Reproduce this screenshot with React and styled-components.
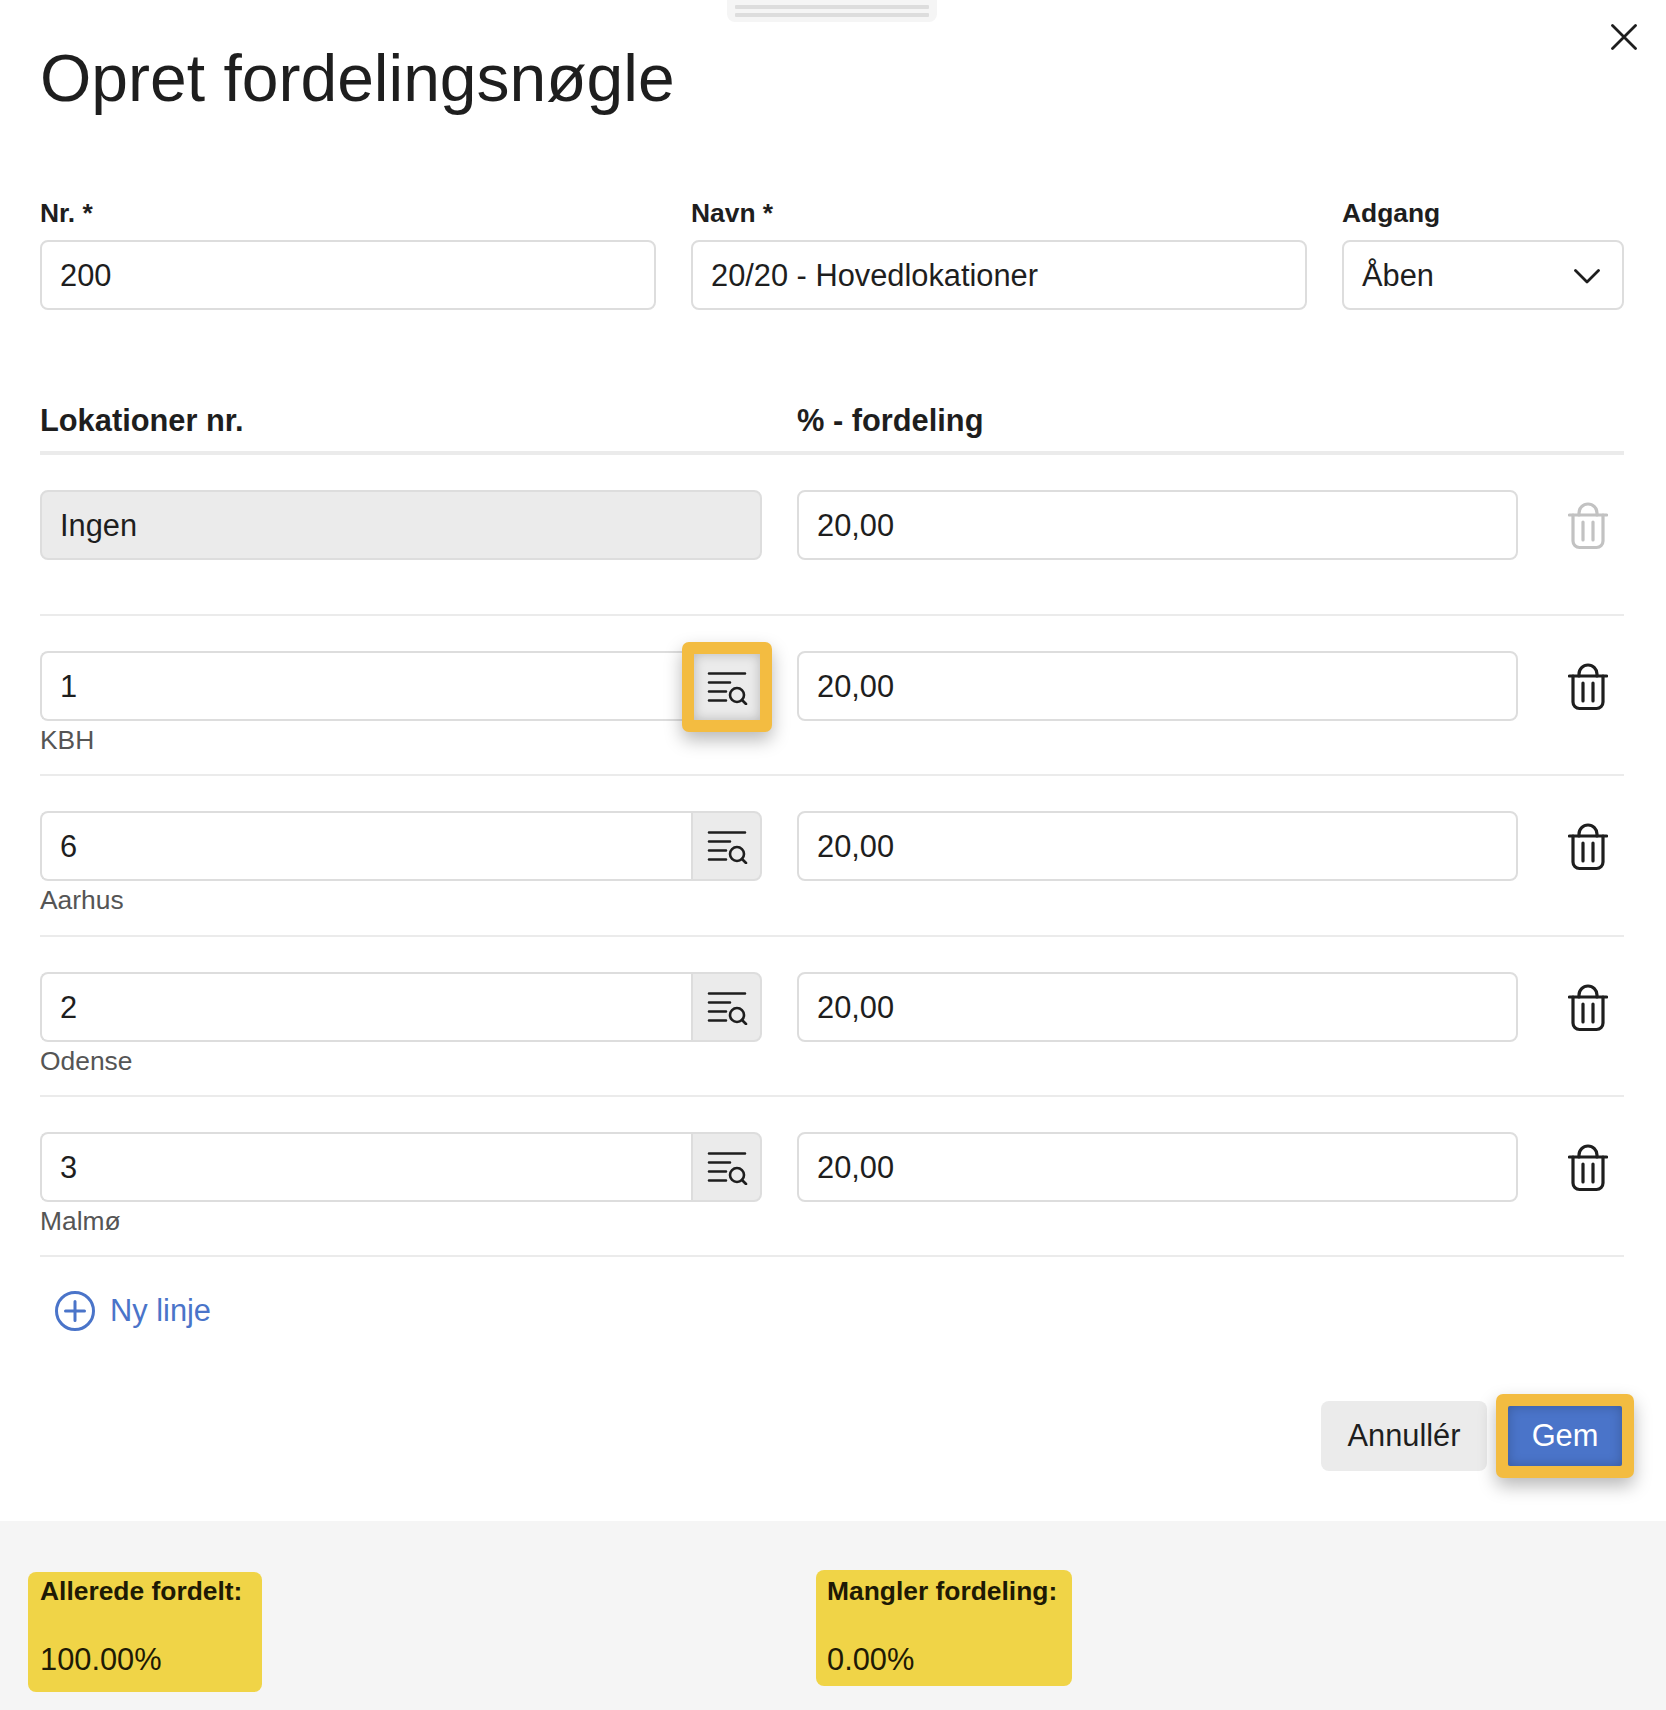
import React from 'react'
import styled, { createGlobalStyle, css } from 'styled-components'

const GlobalStyle = createGlobalStyle`
  * {
    box-sizing: border-box;
  }
  body {
    margin: 0;
    background: #fff;
    color: #1e1e1e;
    font-family: "Liberation Sans", Arial, sans-serif;
  }
`

const highlight = css`
  position: relative;
  top: 1px;
  z-index: 2;
  flex-basis: 70px;
  margin-left: 1px;
  border-color: #f3bc41;
  border-radius: 2px;
  box-shadow: 0 0 0 10px #f3bc41, 0 8px 18px 10px rgba(0, 0, 0, 0.28),
    inset 0 0 12px rgba(0, 0, 0, 0.22);
`

const Page = styled.div`
  position: relative;
  width: 1666px;
  min-height: 1710px;
  display: flex;
  flex-direction: column;
`

const Handle = styled.div`
  position: absolute;
  top: 0;
  left: 727px;
  width: 210px;
  height: 22px;
  padding: 5px 8px 0;
  background: #f5f5f5;
  border-radius: 0 0 8px 8px;
  display: flex;
  flex-direction: column;
  gap: 4px;

  span {
    height: 4px;
    background: #ddd;
    border-radius: 1px;
  }
`

const Main = styled.main`
  padding: 0 42px 0 40px;
  height: 1521px;
`

const Header = styled.header`
  display: flex;
  justify-content: space-between;
  height: 198px;
`

const Title = styled.h1`
  margin: 40px 0 0;
  font-size: 66px;
  line-height: 76px;
  font-weight: 400;
`

const CloseButton = styled.button`
  width: 26px;
  height: 26px;
  margin: 24px -13px 0 0;
  padding: 0;
  border: 0;
  background: none;
  color: #1e1e1e;
`

const FormGrid = styled.div`
  display: grid;
  grid-template-columns: 616px 616px 282px;
  column-gap: 35px;
`

const Label = styled.label`
  display: block;
  margin-bottom: 12px;
  font-size: 26.4px;
  line-height: 30px;
  font-weight: 700;
`

const fieldBase = css`
  width: 100%;
  height: 70px;
  padding: 2px 18px 0;
  border: 2px solid #ddd;
  border-radius: 8px;
  background: ${({ $disabled }) => ($disabled ? '#ebebeb' : '#fff')};
  color: #1e1e1e;
  font-family: inherit;
  font-size: 30.8px;
  outline: none;
`

const Input = styled.input`
  ${fieldBase}
`

const Select = styled.div`
  ${fieldBase}
  display: flex;
  align-items: center;
  justify-content: space-between;
  padding-right: 22px;
`

const TableHead = styled.div`
  display: grid;
  grid-template-columns: 722px 1fr;
  column-gap: 35px;
  margin-top: 92px;
  padding-bottom: 12px;
  border-bottom: 4px solid #ebebeb;
  font-size: 30.8px;
  line-height: 37px;
  font-weight: 700;
`

const Row = styled.div`
  display: grid;
  grid-template-columns: 722px 721px 72px;
  column-gap: 35px;
  align-content: start;
  height: ${({ $first }) => ($first ? '161px' : '160.3px')};
  padding-top: 35px;
  border-bottom: 2px solid #ebebeb;
`

const InputGroup = styled.div`
  display: flex;

  ${Input} {
    flex: 1;
    border-right: 0;
    border-radius: 8px 0 0 8px;
  }
`

const LookupButton = styled.button`
  flex: 0 0 71px;
  height: 70px;
  padding: 0;
  display: flex;
  align-items: center;
  justify-content: center;
  border: 2px solid #ddd;
  border-radius: 0 8px 8px 0;
  background: #ebebeb;
  color: #1e1e1e;
  ${({ $highlight }) => $highlight && highlight}
`

const SubText = styled.div`
  margin-top: 4px;
  font-size: 26.4px;
  line-height: 30px;
  color: #555;
`

const TrashButton = styled.button`
  height: 70px;
  padding: 2px 2px 0 0;
  border: 0;
  background: none;
  display: flex;
  align-items: center;
  justify-content: center;
  color: ${({ $muted }) => ($muted ? '#c2c2c2' : '#1e1e1e')};
`

const AddLine = styled.button`
  display: flex;
  align-items: center;
  gap: 15px;
  margin-top: 34px;
  padding: 0 0 0 15px;
  border: 0;
  background: none;
  color: #4a74c9;
  font-family: inherit;
  font-size: 30.8px;
  line-height: 40px;
`

const Actions = styled.div`
  display: flex;
  justify-content: flex-end;
  align-items: center;
  margin-top: 70px;
  padding-right: 2px;
`

const CancelButton = styled.button`
  width: 166px;
  height: 70px;
  border: 0;
  border-radius: 8px;
  background: #ebebeb;
  color: #1e1e1e;
  font-family: inherit;
  font-size: 30.8px;
`

const SaveButton = styled.button`
  width: 114px;
  height: 60px;
  margin-left: 21px;
  padding: 0;
  border: 0;
  border-radius: 2px;
  background: #4a74c9;
  color: #fff;
  font-family: inherit;
  font-size: 30.8px;
  position: relative;
  z-index: 2;
  box-shadow: 0 0 0 12px #f3bc41, 0 8px 18px 12px rgba(0, 0, 0, 0.28),
    inset 0 0 12px rgba(0, 0, 0, 0.22);
`

const Footer = styled.footer`
  flex: 1;
  display: grid;
  grid-template-columns: 788px 1fr;
  align-items: start;
  padding-left: 28px;
  background: #f5f5f5;
`

const Stat = styled.div`
  width: ${({ $width }) => $width}px;
  height: ${({ $height }) => $height}px;
  margin-top: ${({ $top }) => $top}px;
  padding: ${({ $pad }) => $pad}px 0 0 ${({ $left }) => $left}px;
  border-radius: 8px;
  background: #f0d447;
  color: #1e1a05;
  font-size: 26.4px;
  line-height: 30px;
`

const StatLabel = styled.div`
  font-weight: 700;
  white-space: nowrap;
`

const StatValue = styled.div`
  margin-top: 39px;
  font-size: 30.8px;
`

const LookupIcon = () => (
  <svg width="42" height="36" viewBox="0 0 42 36" fill="none" stroke="currentColor" strokeWidth="2.6" strokeLinecap="round">
    <path d="M3 4.5h36M3 13.5h21M3 22.5h17M3 31.5h17" />
    <circle cx="31" cy="26" r="7" />
    <path d="M36 31l4 4" />
  </svg>
)

const TrashIcon = () => (
  <svg width="40" height="48" viewBox="0 0 40 48" fill="none" stroke="currentColor" strokeWidth="3.2" strokeLinecap="round" strokeLinejoin="round">
    <path d="M1.5 13h37" />
    <path d="M5 13v26a6.5 6.5 0 0 0 6.5 6.5h17A6.5 6.5 0 0 0 35 39V13" />
    <path d="M11 13v-2a9 9 0 0 1 18 0v2" />
    <path d="M15 20v18M25 20v18" />
  </svg>
)

const rows = [
  { nr: '1', name: 'KBH', highlighted: true },
  { nr: '6', name: 'Aarhus' },
  { nr: '2', name: 'Odense' },
  { nr: '3', name: 'Malmø' },
]

export default function App() {
  return (
    <>
      <GlobalStyle />
      <Page>
        <Handle>
          <span />
          <span />
        </Handle>
        <Main>
          <Header>
            <Title>Opret fordelingsnøgle</Title>
            <CloseButton aria-label="Luk">
              <svg width="26" height="26" viewBox="0 0 26 26" fill="none" stroke="currentColor" strokeWidth="2.8" strokeLinecap="round">
                <path d="M1.5 1.5l23 23M24.5 1.5l-23 23" />
              </svg>
            </CloseButton>
          </Header>

          <FormGrid>
            <div>
              <Label>Nr. *</Label>
              <Input readOnly value="200" />
            </div>
            <div>
              <Label>Navn *</Label>
              <Input readOnly value="20/20 - Hovedlokationer" />
            </div>
            <div>
              <Label>Adgang</Label>
              <Select>
                Åben
                <svg width="26" height="15" viewBox="0 0 26 15" fill="none" stroke="currentColor" strokeWidth="2.8" strokeLinecap="round" strokeLinejoin="round">
                  <path d="M1.5 1.5L13 13 24.5 1.5" />
                </svg>
              </Select>
            </div>
          </FormGrid>

          <TableHead>
            <div>Lokationer nr.</div>
            <div>% - fordeling</div>
          </TableHead>

          <Row $first>
            <Input readOnly value="Ingen" $disabled />
            <Input readOnly value="20,00" />
            <TrashButton $muted aria-label="Slet">
              <TrashIcon />
            </TrashButton>
          </Row>

          {rows.map((row) => (
            <Row key={row.nr}>
              <div>
                <InputGroup>
                  <Input readOnly value={row.nr} />
                  <LookupButton $highlight={row.highlighted} aria-label="Søg">
                    <LookupIcon />
                  </LookupButton>
                </InputGroup>
                <SubText>{row.name}</SubText>
              </div>
              <Input readOnly value="20,00" />
              <TrashButton aria-label="Slet">
                <TrashIcon />
              </TrashButton>
            </Row>
          ))}

          <AddLine>
            <svg width="40" height="40" viewBox="0 0 40 40" fill="none" stroke="currentColor" strokeWidth="3" strokeLinecap="round">
              <circle cx="20" cy="20" r="18.5" />
              <path d="M20 10.5v19M10.5 20h19" />
            </svg>
            Ny linje
          </AddLine>

          <Actions>
            <CancelButton>Annullér</CancelButton>
            <SaveButton>Gem</SaveButton>
          </Actions>
        </Main>

        <Footer>
          <Stat $width={234} $height={120} $top={51} $pad={4} $left={12}>
            <StatLabel>Allerede fordelt:</StatLabel>
            <StatValue>100.00%</StatValue>
          </Stat>
          <Stat $width={256} $height={116} $top={49} $pad={6} $left={11}>
            <StatLabel>Mangler fordeling:</StatLabel>
            <StatValue>0.00%</StatValue>
          </Stat>
        </Footer>
      </Page>
    </>
  )
}
